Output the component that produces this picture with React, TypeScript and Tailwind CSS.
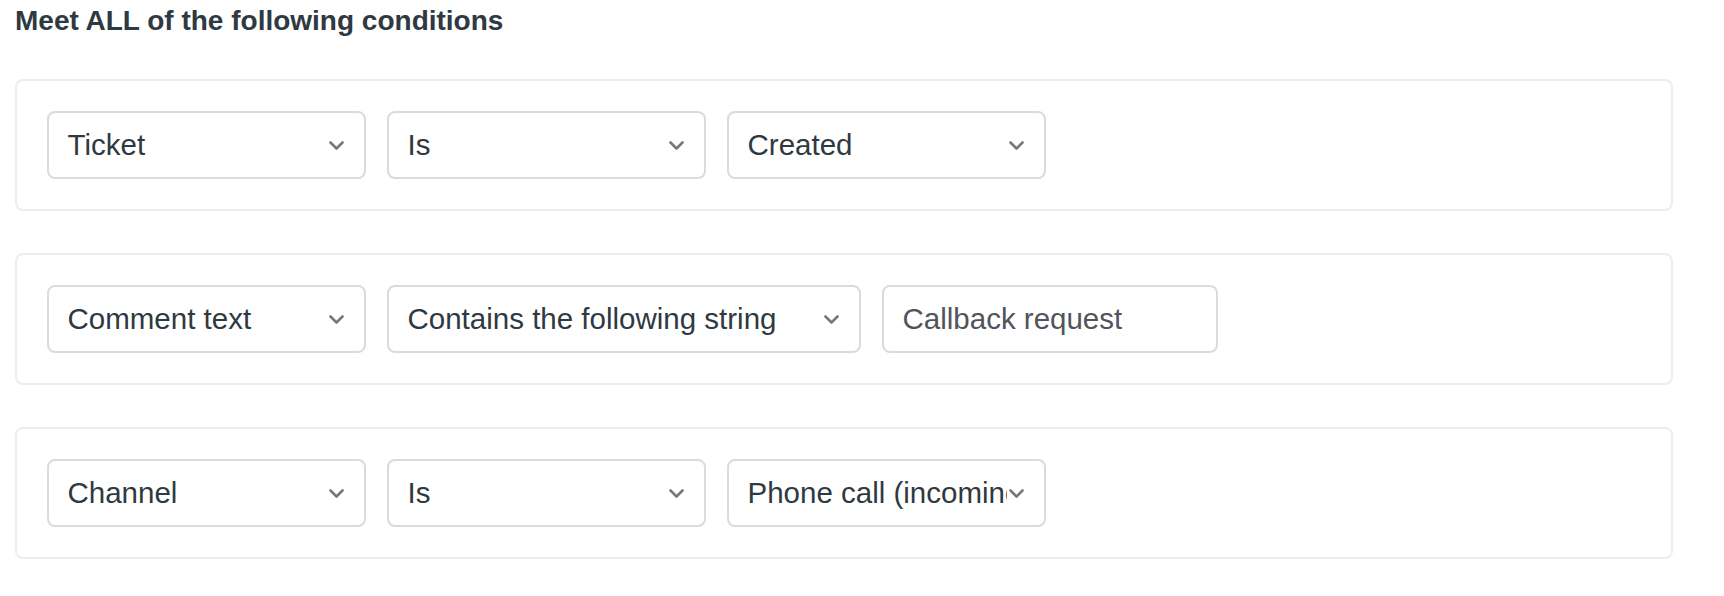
const font = { fontFamily: '"Liberation Sans", Arial, sans-serif' };

type Field = { kind: "select" | "input"; value: string; width: string };

const rows: Field[][] = [
  [
    { kind: "select", value: "Ticket", width: "w-[319px]" },
    { kind: "select", value: "Is", width: "w-[319px]" },
    { kind: "select", value: "Created", width: "w-[319px]" },
  ],
  [
    { kind: "select", value: "Comment text", width: "w-[319px]" },
    { kind: "select", value: "Contains the following string", width: "w-[474px]" },
    { kind: "input", value: "Callback request", width: "w-[336px]" },
  ],
  [
    { kind: "select", value: "Channel", width: "w-[319px]" },
    { kind: "select", value: "Is", width: "w-[319px]" },
    { kind: "select", value: "Phone call (incoming)", width: "w-[319px]" },
  ],
];

const Chevron = () => (
  <svg viewBox="0 0 15 9" className="w-[15px] h-[9px] shrink-0 ml-[2px]" fill="none">
    <polyline
      points="1.5,1.5 7.5,7.5 13.5,1.5"
      stroke="#75797d"
      strokeWidth="2.6"
      strokeLinecap="round"
      strokeLinejoin="round"
    />
  </svg>
);

const FieldBox = ({ kind, value, width }: Field) => {
  if (kind === "input") {
    return (
      <div
        className={`${width} h-[68px] flex items-center border-2 border-[#d8dcde] rounded-[8px] pl-[19px] pr-[19px] bg-white`}
      >
        <span className="text-[29.5px] text-[#4f555b] whitespace-nowrap overflow-hidden">{value}</span>
      </div>
    );
  }
  return (
    <div
      className={`${width} h-[68px] flex items-center border-2 border-[#d8dcde] rounded-[8px] pl-[19px] pr-[20px] bg-white`}
    >
      <span className="flex-1 min-w-0 text-[29.5px] text-[#2f3941] whitespace-nowrap overflow-hidden">
        {value}
      </span>
      <Chevron />
    </div>
  );
};

export default function App() {
  return (
    <div className="min-h-[596px] bg-white pl-[15px] pr-[51px] pt-[5px]" style={font}>
      <h2 className="text-[28px] leading-[32px] font-bold text-[#2f3941] mb-[42px]">
        Meet ALL of the following conditions
      </h2>

      <div className="flex flex-col gap-[42px]">
        {rows.map((row, i) => (
          <div
            key={i}
            className="border-2 border-[#ebedee] rounded-[8px] py-[30px] px-[29.5px] flex gap-[21px]"
          >
            {row.map((f, j) => (
              <FieldBox key={j} {...f} />
            ))}
          </div>
        ))}
      </div>
    </div>
  );
}
